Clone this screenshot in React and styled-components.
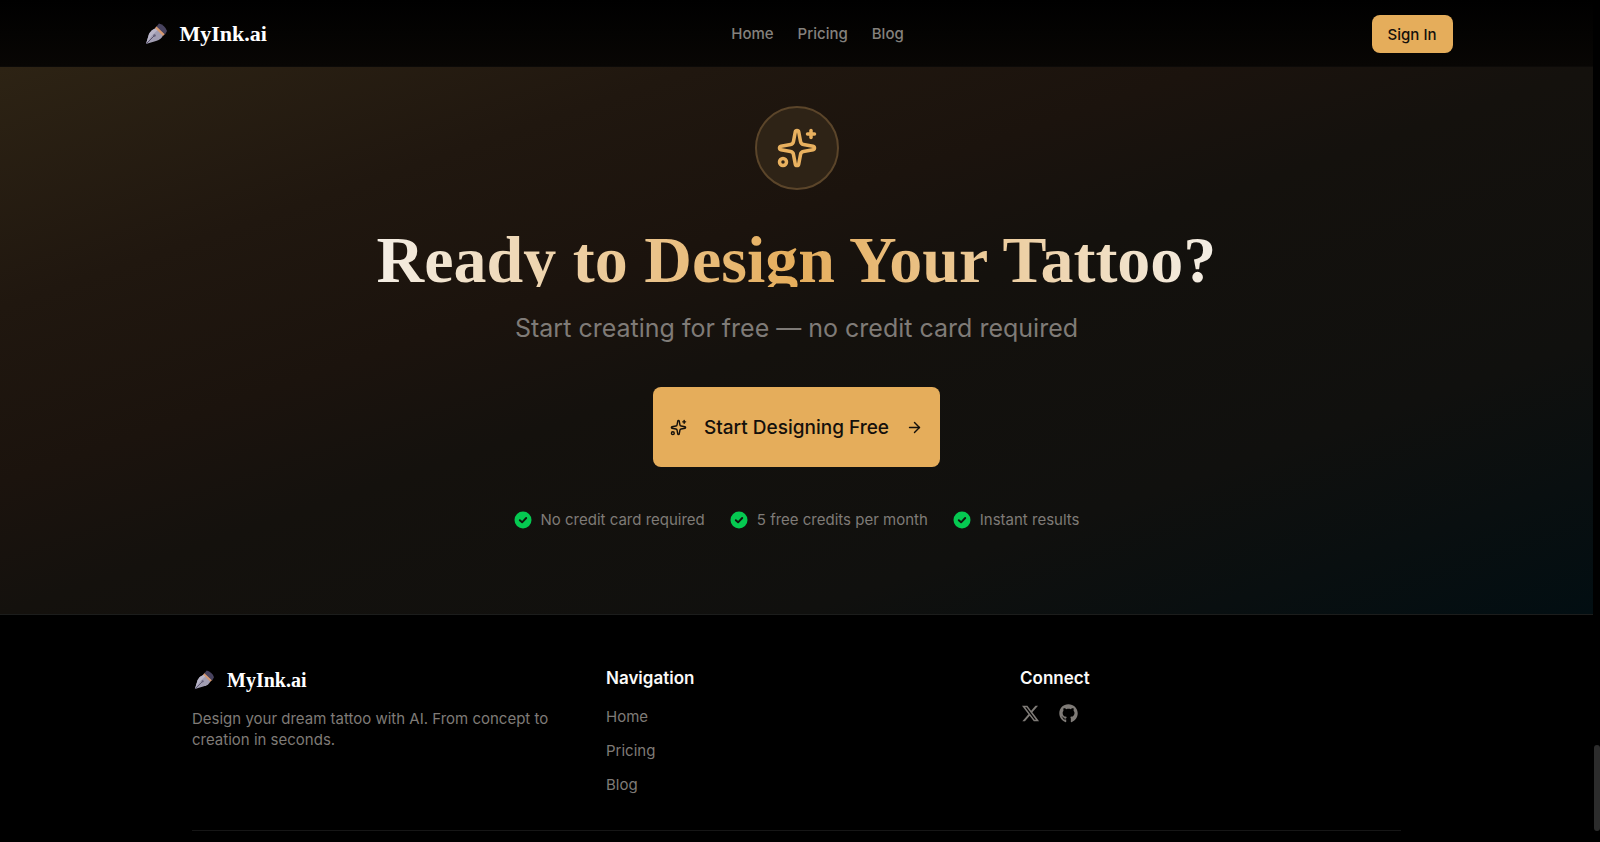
import React from "react";
import styled, { createGlobalStyle } from "styled-components";
import { Sparkles, ArrowRight } from "lucide-react";
import { FaGithub } from "react-icons/fa";
import { FaXTwitter } from "react-icons/fa6";

const Global = createGlobalStyle`
  *, *::before, *::after { box-sizing: border-box; }
  body {
    margin: 0;
    background: #000;
    color: #fbfaf8;
    font-family: Inter, "Liberation Sans", sans-serif;
  }
  h1, h2, p, ul { margin: 0; padding: 0; }
  ul { list-style: none; }
  svg { display: block; flex: none; }
`;

const Page = styled.div`
  display: grid;
  grid-template-columns: minmax(0, 1fr) 7px;
  min-height: 100vh;
`;

const Content = styled.div`
  display: flex;
  flex-direction: column;
`;

const Rail = styled.div`
  display: flex;
  flex-direction: column;
  justify-content: flex-end;
  padding: 0 0 11px 1px;
  background: #000;
`;

const Thumb = styled.span`
  height: 86px;
  border-radius: 3px;
  background: #2c2c2c;
`;

const Header = styled.header`
  background: linear-gradient(#000, #080604);
  border-bottom: 1px solid #0c0a08;
`;

const HeaderInner = styled.div`
  display: grid;
  grid-template-columns: 1fr auto 1fr;
  align-items: center;
  max-width: 1312px;
  height: 66px;
  margin: 0 auto;
  padding-top: 2px;
`;

const Brand = styled.a`
  display: flex;
  align-items: center;
  gap: 13px;
  padding-left: ${(p) => (p.$small ? 2 : 4)}px;
  color: #fff;
  font-family: "Liberation Serif", serif;
  font-size: ${(p) => (p.$small ? 20 : 22)}px;
  line-height: 28px;
  font-weight: 700;
  text-decoration: none;
`;

const Nav = styled.nav`
  display: flex;
  gap: 24px;
  padding-left: 42px;
`;

const NavLink = styled.a`
  color: #84817d;
  font-size: 15px;
  line-height: 20px;
  font-weight: 500;
  text-decoration: none;
`;

const Button = styled.button`
  display: inline-flex;
  align-items: center;
  justify-content: center;
  border: 0;
  border-radius: 8px;
  background: #e5ad5b;
  color: #14100b;
  font-family: inherit;
  font-weight: 500;
  cursor: pointer;
`;

const SignIn = styled(Button)`
  justify-self: end;
  height: 38px;
  padding: 0 16px;
  font-size: 15px;
`;

const StartButton = styled(Button)`
  gap: 17px;
  height: 80px;
  margin-top: 41px;
  padding: 0 17px;
  font-size: 19px;
`;

const Hero = styled.section`
  display: flex;
  flex-direction: column;
  align-items: center;
  padding: 39px 24px 83px;
  background: linear-gradient(
    to bottom right,
    #2d2314 0%,
    #20170f 22%,
    #1b130d 38%,
    #14110d 50%,
    #10100e 75%,
    #020e12 100%
  );
`;

const HeroBadge = styled.div`
  display: grid;
  place-items: center;
  width: 84px;
  height: 84px;
  border: 2px solid #5b452a;
  border-radius: 50%;
  background: #2e2316;
  color: #e9b15f;
`;

const Title = styled.h1`
  margin-top: 32px;
  padding-top: 11px;
  background: linear-gradient(to right, #f4eee5, #e5ad5b 50%, #f4eee5);
  background-clip: text;
  -webkit-background-clip: text;
  color: transparent;
  font-family: "Liberation Serif", serif;
  font-size: 66px;
  line-height: 54px;
  font-weight: 700;
  text-align: center;
`;

const Subtitle = styled.p`
  margin-top: 23px;
  color: #7f7b77;
  font-size: 25px;
  line-height: 36px;
  text-align: center;
`;

const Perks = styled.ul`
  display: flex;
  flex-wrap: wrap;
  justify-content: center;
  gap: 25px;
  margin-top: 42px;
`;

const Perk = styled.li`
  display: flex;
  align-items: center;
  gap: 9px;
  color: #7f7b77;
  font-size: 15px;
  line-height: 22px;
`;

const Footer = styled.footer`
  flex: 1;
  border-top: 1px solid #1c1d1c;
  background: #000;
`;

const FooterInner = styled.div`
  max-width: 1209px;
  margin: 0 auto;
  padding-top: 49px;
`;

const Columns = styled.div`
  display: grid;
  grid-template-columns: repeat(3, minmax(0, 1fr));
  gap: 33px;
  padding-bottom: 34px;
  border-bottom: 1px solid #161616;
`;

const BrandColumn = styled.div`
  padding-top: 2px;
`;

const Tagline = styled.p`
  margin-top: 14px;
  color: #7f7b77;
  font-size: 15px;
  line-height: 21px;
`;

const ColumnTitle = styled.h2`
  padding-top: 2px;
  font-size: 17px;
  line-height: 25px;
  font-weight: 600;
`;

const LinkList = styled.ul`
  display: grid;
  gap: 12px;
  margin-top: 15px;
`;

const FooterLink = styled.a`
  display: block;
  color: #7f7b77;
  font-size: 15px;
  line-height: 22px;
  text-decoration: none;
`;

const Socials = styled.div`
  display: flex;
  gap: 19px;
  margin-top: 13px;
  padding-left: 1px;

  a { color: #7f7b77; }
`;

function PenIcon({ size }) {
  return (
    <svg width={size} height={size} viewBox="0 0 22 22" aria-hidden="true">
      <path d="M1 21 L4 11 Q6 7 11 5 L18 12 Q17 16 11 18 Z" fill="#a19db2" />
      <path d="M1 21 L4 11 Q6 7 11 5 L13 7 Q7 11 1 21 Z" fill="#b9b5c8" />
      <path d="M1 21 L9 13" stroke="#56516b" strokeWidth="1" />
      <circle cx="9.5" cy="12.5" r="1.2" fill="#625d78" />
      <path d="M10 5 L12 3 L20 11 L18 13 Z" fill="#d79a72" />
      <path d="M11.500 3.500 L14 0.5 Q20 2 22 8 L20 11.500 Z" fill="#48435f" />
    </svg>
  );
}

function CheckIcon() {
  return (
    <svg width="18" height="18" viewBox="0 0 18 18" fill="none" aria-hidden="true">
      <circle cx="9" cy="9" r="8.500" fill="#05c951" />
      <path
        d="M5.800 9.200 L8.100 11.300 L12.200 7"
        stroke="#10140e"
        strokeWidth="1.900"
        strokeLinecap="round"
        strokeLinejoin="round"
      />
    </svg>
  );
}

const links = ["Home", "Pricing", "Blog"];
const perks = ["No credit card required", "5 free credits per month", "Instant results"];

export default function App() {
  return (
    <Page>
      <Global />
      <Content>
        <Header>
          <HeaderInner>
            <Brand href="#">
              <PenIcon size={22} />
              MyInk.ai
            </Brand>
            <Nav aria-label="Main">
              {links.map((l) => (
                <NavLink key={l} href="#">{l}</NavLink>
              ))}
            </Nav>
            <SignIn type="button">Sign In</SignIn>
          </HeaderInner>
        </Header>
        <main>
          <Hero>
            <HeroBadge>
              <Sparkles size={42} />
            </HeroBadge>
            <Title>Ready to Design Your Tattoo?</Title>
            <Subtitle>Start creating for free — no credit card required</Subtitle>
            <StartButton type="button">
              <Sparkles size={17} />
              Start Designing Free
              <ArrowRight size={17} />
            </StartButton>
            <Perks>
              {perks.map((p) => (
                <Perk key={p}>
                  <CheckIcon />
                  {p}
                </Perk>
              ))}
            </Perks>
          </Hero>
        </main>
        <Footer>
          <FooterInner>
            <Columns>
              <BrandColumn>
                <Brand href="#" $small>
                  <PenIcon size={20} />
                  MyInk.ai
                </Brand>
                <Tagline>
                  Design your dream tattoo with AI. From concept to creation in seconds.
                </Tagline>
              </BrandColumn>
              <nav aria-labelledby="footer-nav">
                <ColumnTitle id="footer-nav">Navigation</ColumnTitle>
                <LinkList>
                  {links.map((l) => (
                    <li key={l}>
                      <FooterLink href="#">{l}</FooterLink>
                    </li>
                  ))}
                </LinkList>
              </nav>
              <div>
                <ColumnTitle>Connect</ColumnTitle>
                <Socials>
                  <a href="#" aria-label="X"><FaXTwitter size={19} /></a>
                  <a href="#" aria-label="GitHub"><FaGithub size={19} /></a>
                </Socials>
              </div>
            </Columns>
          </FooterInner>
        </Footer>
      </Content>
      <Rail aria-hidden="true">
        <Thumb />
      </Rail>
    </Page>
  );
}
